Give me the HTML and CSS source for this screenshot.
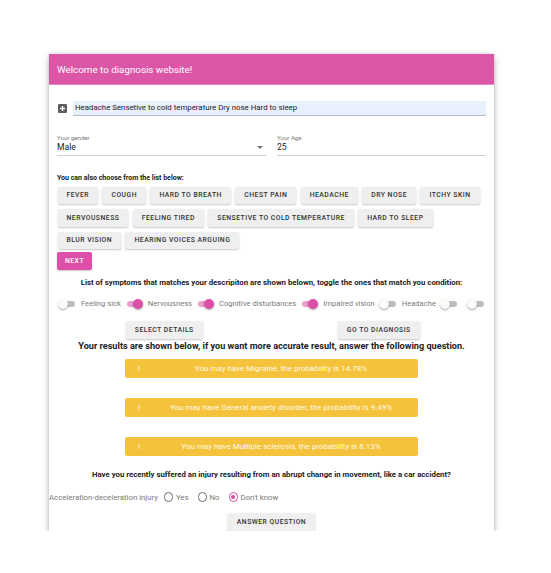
FILE: index.html
```html
<!DOCTYPE html>
<html>
<head>
<meta charset="utf-8">
<link rel="stylesheet" href="styles.css">
</head>
<body>
<div class="card">
  <header class="bar">Welcome to diagnosis website!</header>
  <div class="content">
    <div class="search">
      <svg class="plus" viewBox="0 0 9 9" width="9" height="9"><rect x="0" y="0" width="9" height="9" rx="1" fill="#5f5f5f"/><path d="M4.5 2v5M2 4.5h5" stroke="#fff" stroke-width="1.4"/></svg>
      <div class="input">Headache Sensetive to cold temperature Dry nose Hard to sleep</div>
    </div>
    <div class="fields">
      <div class="field">
        <div class="flabel">Your gender</div>
        <div class="fvalue"><span>Male</span><svg class="caret" viewBox="0 0 6 3" width="6" height="3"><path d="M0 0h6L3 3z" fill="#757575"/></svg></div>
      </div>
      <div class="field">
        <div class="flabel">Your Age</div>
        <div class="fvalue"><span>25</span></div>
      </div>
    </div>
    <p class="hint">You can also choose from the list below:</p>
    <div class="chips">
      <button class="btn">FEVER</button>
      <button class="btn">COUGH</button>
      <button class="btn">HARD TO BREATH</button>
      <button class="btn">CHEST PAIN</button>
      <button class="btn">HEADACHE</button>
      <button class="btn">DRY NOSE</button>
      <button class="btn">ITCHY SKIN</button>
      <button class="btn">NERVOUSNESS</button>
      <button class="btn">FEELING TIRED</button>
      <button class="btn">SENSETIVE TO COLD TEMPERATURE</button>
      <button class="btn">HARD TO SLEEP</button>
      <button class="btn">BLUR VISION</button>
      <button class="btn">HEARING VOICES ARGUING</button>
    </div>
    <button class="btn next">NEXT</button>
    <p class="heading">List of symptoms that matches your descripiton are shown belown, toggle the ones that match you condition:</p>
    <div class="toggles">
      <label class="tog"><span class="switch"><span class="track"></span><span class="knob"></span></span><span class="tlabel">Feeling sick</span></label>
      <label class="tog"><span class="switch on"><span class="track"></span><span class="knob"></span></span><span class="tlabel">Nervousness</span></label>
      <label class="tog"><span class="switch on"><span class="track"></span><span class="knob"></span></span><span class="tlabel">Cognitive disturbances</span></label>
      <label class="tog"><span class="switch on"><span class="track"></span><span class="knob"></span></span><span class="tlabel">Impaired vision</span></label>
      <label class="tog"><span class="switch"><span class="track"></span><span class="knob"></span></span><span class="tlabel">Headache</span></label>
      <label class="tog"><span class="switch"><span class="track"></span><span class="knob"></span></span><span class="tlabel"></span></label>
      <label class="tog"><span class="switch"><span class="track"></span><span class="knob"></span></span><span class="tlabel"></span></label>
    </div>
    <div class="actions">
      <div class="cell"><button class="btn">SELECT DETAILS</button></div>
      <div class="cell"><button class="btn">GO TO DIAGNOSIS</button></div>
    </div>
    <p class="results">Your results are shown below, if you want more accurate result, answer the following question.</p>
    <div class="alerts">
      <div class="alert"><span class="ai">!</span><span class="am">You may have Migraine, the probability is 14.78%</span></div>
      <div class="alert"><span class="ai">!</span><span class="am">You may have General anxiety disorder, the probability is 9.49%</span></div>
      <div class="alert"><span class="ai">!</span><span class="am">You may have Multiple sclerosis, the probability is 8.13%</span></div>
    </div>
    <p class="question">Have you recently suffered an injury resulting from an abrupt change in movement, like a car accident?</p>
    <div class="radios">
      <span class="rlabel">Acceleration-deceleration injury</span>
      <span class="ritem"><span class="radio"></span><span class="rtext">Yes</span></span>
      <span class="ritem"><span class="radio"></span><span class="rtext">No</span></span>
      <span class="ritem"><span class="radio checked"></span><span class="rtext">Don't know</span></span>
    </div>
    <div class="answer"><button class="btn">ANSWER QUESTION</button></div>
  </div>
</div>
</body>
</html>
```
FILE: styles.css
```css
* { box-sizing: border-box; }
html, body { margin: 0; padding: 0; background: #fff; }
body { font-family: Roboto, "Liberation Sans", Arial, sans-serif; color: #222; }
p { margin: 0; }

.card {
  margin: 54px 0 0 49px;
  width: 445px;
  background: #fff;
  box-shadow: 0 3px 7px rgba(0,0,0,0.28), 0 0 3px rgba(0,0,0,0.12);
}
.bar {
  height: 31px;
  background: #dc56a8;
  color: #fff;
  font-size: 9.8px;
  line-height: 31px;
  padding-left: 8px;
  border-bottom: 1px solid #e78cc4;
}
.content { padding: 0 8px; }

.search { display: flex; align-items: center; margin-top: 16px; height: 15px; }
.plus { margin-left: 1px; margin-right: 6px; flex: none; }
.input {
  flex: 1;
  height: 15px;
  background: #e8f0fe;
  border-bottom: 1px solid #b8bcc4;
  font-size: 7.85px;
  line-height: 14px;
  padding-left: 2px;
  color: #222;
}

.fields { display: grid; grid-template-columns: 209px 209px; column-gap: 11px; margin-top: 18px; }
.flabel { font-size: 6.1px; line-height: 8px; color: #7a7a7a; }
.fvalue {
  display: flex; justify-content: space-between; align-items: center;
  font-size: 8.6px; line-height: 11px; padding-bottom: 2px;
  border-bottom: 1px solid #cfcfcf; color: #222;
}
.caret { margin-right: 3px; }

.hint { margin-top: 18px; font-size: 7px; line-height: 9px; font-weight: 700; color: #222; }

.btn {
  font-family: inherit;
  border: none;
  height: 17.5px;
  padding: 0 9px;
  background: #efefef;
  color: #333;
  font-size: 6.8px;
  font-weight: 500;
  letter-spacing: 0.5px;
  white-space: nowrap;
  border-radius: 2px;
  box-shadow: 0 1px 2px rgba(0,0,0,0.22);
}
.chips { display: flex; flex-wrap: wrap; column-gap: 4.4px; row-gap: 5px; margin-top: 3.5px; padding-left: 0.5px; }
.next { display: block; margin-top: 3px; background: #dd4fa8; color: #fff; width: 35px; padding: 0; }

.heading { margin-top: 8.5px; text-align: center; font-size: 7.8px; line-height: 10px; font-weight: 700; }

.toggles { display: flex; align-items: center; gap: 4px; margin-top: 10px; height: 12px; padding-left: 1px; white-space: nowrap; }
.tog { display: flex; align-items: center; }
.switch { position: relative; width: 18px; height: 10px; margin-right: 5px; flex: none; }
.track { position: absolute; left: 2px; right: 1px; top: 2px; height: 6px; border-radius: 3px; background: #bdbdbd; }
.knob { position: absolute; left: 0; top: 0; width: 10px; height: 10px; border-radius: 50%; background: #fafafa; box-shadow: 0 1px 2px rgba(0,0,0,0.35); }
.switch.on .track { background: #eba0cf; }
.switch.on .knob { left: 8px; background: #dd4fa8; }
.tlabel { font-size: 7.6px; line-height: 12px; color: #7a7a7a; }

.actions { display: grid; grid-template-columns: 1fr 1fr; margin-top: 11px; }
.cell { display: flex; justify-content: center; }

.results { margin-top: 1px; text-align: center; font-size: 9.15px; line-height: 12px; font-weight: 700; }

.alerts { display: flex; flex-direction: column; align-items: center; gap: 20px; margin-top: 7px; }
.alert {
  width: 293px; height: 19px;
  background: #f5c33b;
  border-radius: 2px;
  display: flex; align-items: center;
  padding-left: 11px;
  color: #fff;
  font-size: 8px;
}
.ai { width: 6px; text-align: center; font-size: 8px; }
.am { flex: 1; text-align: center; margin-left: 2px; color: rgba(255,255,255,0.93); }

.question { margin-top: 14.5px; text-align: center; font-size: 7.8px; line-height: 10px; font-weight: 700; }

.radios { display: flex; align-items: center; margin: 11px 0 0 -8px; height: 12px; font-size: 7.8px; color: #7a7a7a; }
.rlabel { margin-right: 6px; }
.ritem { display: flex; align-items: center; margin-right: 9px; }
.radio { width: 9.5px; height: 9.5px; border-radius: 50%; border: 1.1px solid #6f6f6f; margin-right: 2.5px; position: relative; flex: none; }
.radio.checked { border-color: #dd4fa8; }
.radio.checked::after { content: ""; position: absolute; left: 1.6px; top: 1.6px; width: 4.2px; height: 4.2px; border-radius: 50%; background: #dd4fa8; }

.answer { display: flex; justify-content: center; margin-top: 10px; }
```
